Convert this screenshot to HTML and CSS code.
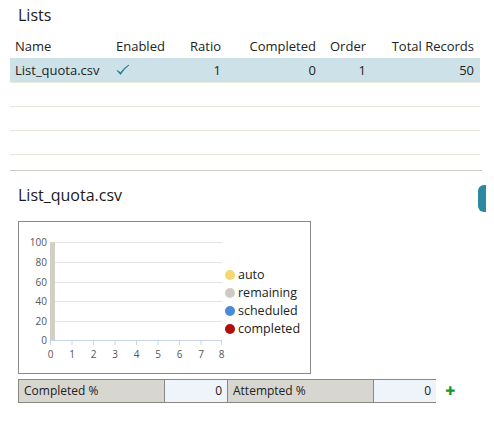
FILE: index.html
```html
<!DOCTYPE html>
<html lang="en">
  <head>
    <meta charset="UTF-8" />
    <title>Lists</title>
    <link rel="stylesheet" href="styles.css">
  </head>
  <body>
    <div id="lists">
      <h3 class="title">Lists</h3>
      <table class="grid">
        <thead>
          <tr>
            <th class="name">Name</th>
            <th class="enabled">Enabled</th>
            <th class="num ratio">Ratio</th>
            <th class="num completed">Completed</th>
            <th class="num order">Order</th>
            <th class="num">Total Records</th>
          </tr>
        </thead>
        <tbody>
          <tr class="selected">
            <td class="name">List_quota.csv</td>
            <td class="enabled">
              <svg class="check" width="14" height="12" viewBox="0 0 14 12">
                <path d="M1 6.5 L4.5 10.5 Q8 4.5 13 1 Q7.5 4 4.6 8.6 Z" fill="#2a7f94" stroke="#2a7f94" stroke-width="0.8" stroke-linejoin="round" />
              </svg>
            </td>
            <td class="num">1</td>
            <td class="num">0</td>
            <td class="num">1</td>
            <td class="num">50</td>
          </tr>
          <tr><td colspan="6"></td></tr>
          <tr><td colspan="6"></td></tr>
          <tr><td colspan="6"></td></tr>
        </tbody>
      </table>
    </div>

    <div id="detail">
      <h3 class="title">List_quota.csv</h3>
      <div class="tab"></div>
      <div class="chartbox">
        <svg width="290" height="150" viewBox="0 0 290 150">
          <g stroke="#e4e4e4" stroke-width="1">
            <line x1="31" y1="20.5" x2="203" y2="20.5" />
            <line x1="31" y1="40.5" x2="203" y2="40.5" />
            <line x1="31" y1="60.5" x2="203" y2="60.5" />
            <line x1="31" y1="79.5" x2="203" y2="79.5" />
            <line x1="31" y1="99.5" x2="203" y2="99.5" />
          </g>
          <rect x="31" y="20" width="5" height="99" fill="#d3cfc6" />
          <g stroke="#c8d4e4" stroke-width="1">
            <line x1="31" y1="118.5" x2="203" y2="118.5" />
            <line x1="31.5" y1="118" x2="31.5" y2="123" />
            <line x1="53" y1="118" x2="53" y2="123" />
            <line x1="74.5" y1="118" x2="74.5" y2="123" />
            <line x1="96" y1="118" x2="96" y2="123" />
            <line x1="117.5" y1="118" x2="117.5" y2="123" />
            <line x1="139" y1="118" x2="139" y2="123" />
            <line x1="160.5" y1="118" x2="160.5" y2="123" />
            <line x1="182" y1="118" x2="182" y2="123" />
            <line x1="202.5" y1="118" x2="202.5" y2="123" />
          </g>
          <g class="axis" text-anchor="end">
            <text x="28" y="24">100</text>
            <text x="28" y="44">80</text>
            <text x="28" y="64">60</text>
            <text x="28" y="83">40</text>
            <text x="28" y="103">20</text>
            <text x="28" y="122">0</text>
          </g>
          <g class="axis" text-anchor="middle">
            <text x="31.5" y="136">0</text>
            <text x="53" y="136">1</text>
            <text x="74.5" y="136">2</text>
            <text x="96" y="136">3</text>
            <text x="117.5" y="136">4</text>
            <text x="139" y="136">5</text>
            <text x="160.5" y="136">6</text>
            <text x="182" y="136">7</text>
            <text x="202.5" y="136">8</text>
          </g>
          <g class="legend">
            <circle cx="211" cy="53" r="5" fill="#f5d76e" />
            <text x="219" y="57">auto</text>
            <circle cx="211" cy="71" r="5" fill="#cfcbc4" />
            <text x="219" y="75">remaining</text>
            <circle cx="211" cy="89" r="5" fill="#4a8ad6" />
            <text x="219" y="93">scheduled</text>
            <circle cx="211" cy="107" r="5" fill="#b00f0f" />
            <text x="219" y="111">completed</text>
          </g>
        </svg>
      </div>
      <div class="stats">
        <div class="label">Completed %</div>
        <div class="value">0</div>
        <div class="label">Attempted %</div>
        <div class="value">0</div>
        <span class="add">&#10010;</span>
      </div>
    </div>
  </body>
</html>
```

FILE: styles.css
```css
* {
  padding: 0;
  margin: 0;
  box-sizing: border-box;
}
body {
  font-family: "Open Sans", "DejaVu Sans", sans-serif;
  font-size: 13px;
  color: #222;
  background: #fff;
  width: 494px;
  height: 424px;
  overflow: hidden;
}
.title {
  font-size: 16px;
  font-weight: 400;
  color: #1a1a1a;
  padding-left: 18px;
}
#lists {
  padding: 4px 12px 0 10px;
}
#lists .title {
  padding-left: 8px;
  height: 30px;
}
.grid {
  width: 470px;
  border-collapse: collapse;
  table-layout: fixed;
}
.grid th {
  font-weight: 400;
  height: 24px;
  padding: 0 6px 0 5px;
  text-align: left;
}
.grid td {
  height: 24px;
  padding: 0 6px 0 5px;
  border-bottom: 1px solid #ebe7dc;
}
.grid .num {
  text-align: right;
}
.grid th.num {
  text-align: right;
}
.grid .name {
  width: 101px;
}
.grid .enabled {
  width: 70px;
}
.grid .ratio {
  width: 46px;
}
.grid .completed {
  width: 95px;
}
.grid .order {
  width: 50px;
}
.selected td {
  background: #cde2e8;
}
.check {
  display: block;
}
#detail {
  position: relative;
  margin-top: 15px;
  border-top: 1px solid #cdcbc4;
  margin-left: 10px;
  margin-right: 12px;
  padding-top: 13px;
}
#detail .title {
  padding-left: 8px;
  height: 37px;
}
.tab {
  position: absolute;
  right: -4px;
  top: 14px;
  width: 8px;
  height: 27px;
  background: #2b8a9f;
  border-radius: 6px 0 0 6px;
}
.chartbox {
  margin-left: 8px;
  width: 293px;
  height: 153px;
  border: 1px solid #8a8884;
  padding: 0;
}
.chartbox svg {
  display: block;
}
.axis text {
  font-size: 10px;
  fill: #555;
}
.legend text {
  font-size: 12.5px;
  fill: #222;
}
.stats {
  display: flex;
  align-items: center;
  margin-left: 8px;
  margin-top: 5px;
}
.stats .label,
.stats .value {
  height: 24px;
  line-height: 22px;
  border: 1px solid #8a8884;
  padding: 0 5px;
  font-size: 12px;
}
.stats .label {
  width: 147px;
  background: #d8d6d1;
}
.stats .value {
  width: 62px;
  background: #eff3fa;
  text-align: right;
  border-left: 0;
  border-right: 0;
}
.add {
  color: #1a9a2a;
  font-size: 12px;
  margin-left: 9px;
  font-weight: 700;
}
```
